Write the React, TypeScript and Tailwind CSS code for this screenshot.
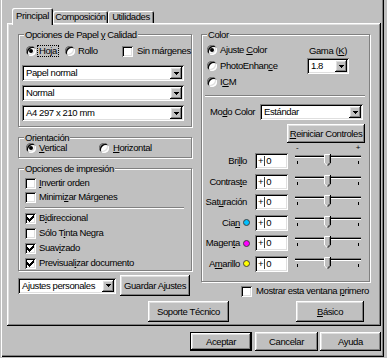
import type { ReactNode } from "react";

// Win9x style bevels
const RAISED =
  "shadow-[inset_-1px_-1px_0_#000,inset_1px_1px_0_#fff,inset_-2px_-2px_0_#808080,inset_2px_2px_0_#dfdfdf]";
const SUNKEN =
  "shadow-[inset_1px_1px_0_#808080,inset_-1px_-1px_0_#fff,inset_2px_2px_0_#000,inset_-2px_-2px_0_#dfdfdf]";
const TAB =
  "shadow-[inset_1px_1px_0_#fff,inset_-1px_0_0_#000,inset_-2px_0_0_#808080]";

function U({ children }: { children: ReactNode }) {
  return <span className="underline">{children}</span>;
}

function Group({ title, className, children }: { title: ReactNode; className: string; children: ReactNode }) {
  return (
    <fieldset className={`border border-[#808080] shadow-[1px_1px_0_#fff,inset_1px_1px_0_#fff] ${className}`}>
      <legend className="ml-[5px] px-px leading-[13px] bg-[#c0c0c0]">{title}</legend>
      {children}
    </fieldset>
  );
}

function Radio({ on }: { on?: boolean }) {
  return (
    <span className={`w-[10px] h-[10px] shrink-0 rounded-full bg-white flex items-center justify-center ${SUNKEN}`}>
      {on && <span className="w-[4px] h-[4px] rounded-full bg-black" />}
    </span>
  );
}

function Check({ on }: { on?: boolean }) {
  return (
    <span className={`w-[11px] h-[11px] shrink-0 bg-white flex items-center justify-center ${SUNKEN}`}>
      {on && (
        <svg width="7" height="7" viewBox="0 0 7 7" shapeRendering="crispEdges">
          <path
            d="M6 0h1v1H6zM5 1h2v1H5zM0 2h1v1H0zM4 2h3v1H4zM0 3h2v1H0zM3 3h3v1H3zM0 4h5v1H0zM1 5h3v1H1zM2 6h1v1H2z"
            fill="#000"
          />
        </svg>
      )}
    </span>
  );
}

function Select({ text, className }: { text: string; className: string }) {
  return (
    <div className={`flex items-stretch bg-white p-[2px] ${SUNKEN} ${className}`}>
      <span className="flex-1 flex items-center pl-[2px] whitespace-nowrap overflow-hidden">{text}</span>
      <span className={`w-[12px] shrink-0 flex items-center justify-center bg-[#c0c0c0] ${RAISED}`}>
        <svg width="5" height="3" viewBox="0 0 5 3" shapeRendering="crispEdges">
          <path d="M0 0h5v1H0zM1 1h3v1H1zM2 2h1v1H2z" fill="#000" />
        </svg>
      </span>
    </div>
  );
}

function Btn({ className, children }: { className: string; children: ReactNode }) {
  return (
    <button type="button" className={`flex items-center justify-center whitespace-nowrap bg-[#c0c0c0] ${RAISED} ${className}`}>
      {children}
    </button>
  );
}

function Slider() {
  return (
    <div className="relative w-[66px] h-[16px]">
      <div className="mt-[4px] h-[3px] border-t border-t-[#808080] border-b border-b-white bg-black" />
      <div className="mt-[3px] flex justify-between px-[2px]">
        <span className="w-px h-[3px] bg-black" />
        <span className="w-px h-[3px] bg-black" />
        <span className="w-px h-[3px] bg-black" />
      </div>
      {/* thumb */}
      <svg className="absolute left-[29px] -top-[1px]" width="7" height="12" viewBox="0 0 7 12">
        <path d="M0 0H7V9L3.5 12L0 9Z" fill="#c0c0c0" />
        <path d="M0.5 9V0.5H6" stroke="#fff" fill="none" />
        <path d="M0.5 9L3.2 11.5" stroke="#fff" fill="none" />
        <path d="M6.5 0V9L3.5 11.8" stroke="#000" fill="none" />
        <path d="M5.5 1V8.6L3.5 10.5" stroke="#808080" fill="none" />
      </svg>
    </div>
  );
}

const SLIDERS: { label: ReactNode; dot?: string }[] = [
  { label: <>Bri<U>l</U>lo</> },
  { label: <>Contras<U>t</U>e</> },
  { label: <>Sat<U>u</U>ración</> },
  { label: <>Cia<U>n</U></>, dot: "bg-[#00c0ff]" },
  { label: <>Magen<U>t</U>a</>, dot: "bg-[#ff00ff]" },
  { label: <>A<U>m</U>arillo</>, dot: "bg-[#ffff00]" },
];

export default function App() {
  return (
    <div className="w-[387px] h-[358px] bg-[#c0c0c0] pl-px text-black text-[9.5px] tracking-[-0.4px] leading-[12px] font-['Liberation_Sans',Arial,sans-serif] overflow-hidden">
      <div className="w-[383px] h-[357px] pt-[8px] pl-[6px] flex flex-col shadow-[inset_1px_0_0_#fff,inset_-1px_-1px_0_#000,inset_-2px_-2px_0_#808080]">
        {/* Tabs */}
        <div className="flex items-end h-[15px] pl-[5px]">
          <div className={`relative z-10 w-[41px] h-[17px] -mb-[2px] bg-[#c0c0c0] rounded-t-[2px] flex justify-center pt-[2px] ${TAB}`}>
            Principal
          </div>
          <div className={`w-[55px] h-[12px] rounded-t-[2px] flex justify-center ${TAB}`}>Composición</div>
          <div className={`w-[46px] h-[12px] rounded-t-[2px] flex justify-center ${TAB}`}>Utilidades</div>
        </div>

        {/* Tab panel */}
        <div className={`w-[374px] h-[303px] flex flex-col pt-[5px] pl-[11px] ${RAISED}`}>
          <div className="flex gap-[9px] h-[270px]">
            {/* Left column */}
            <div className="w-[174px] flex flex-col">
              <Group title={<>Opciones de Papel <U>y</U> Calidad</>} className="h-[99px]">
                <div className="flex flex-col">
                  <div className="mt-[4px] h-[12px] flex items-center pl-[7px]">
                    <div className="w-[39px] flex items-center">
                      <Radio on />
                      <span className="ml-px h-[12px] flex items-center border border-dotted border-black px-px">Hoja</span>
                    </div>
                    <div className="w-[57px] flex items-center gap-[3px]">
                      <Radio />
                      <span>Rollo</span>
                    </div>
                    <div className="flex items-center gap-[4px] whitespace-nowrap">
                      <Check />
                      <span>Sin márgenes</span>
                    </div>
                  </div>
                  <div className="mt-[8px] pl-[3px] flex flex-col gap-[4px]">
                    <Select text="Papel normal" className="w-[162px] h-[16px]" />
                    <Select text="Normal" className="w-[162px] h-[16px]" />
                    <Select text="A4 297 x 210 mm" className="w-[162px] h-[16px]" />
                  </div>
                </div>
              </Group>

              <Group title="Orientación" className="mt-[4px] h-[27px]">
                <div className="-mt-[1px] h-[10px] flex items-center pl-[7px]">
                  <div className="w-[73px] flex items-center gap-[3px]">
                    <Radio on />
                    <span><U>V</U>ertical</span>
                  </div>
                  <div className="flex items-center gap-[4px]">
                    <Radio />
                    <span><U>H</U>orizontal</span>
                  </div>
                </div>
              </Group>

              <Group title="Opciones de impresión" className="mt-[4px] h-[109px]">
                <div className="pt-[1px] pl-[6px] flex flex-col">
                  <div className="h-[14px] flex items-center gap-[3px]">
                    <Check />
                    <span><U>I</U>nvertir orden</span>
                  </div>
                  <div className="h-[14px] flex items-center gap-[3px]">
                    <Check />
                    <span>Minimi<U>z</U>ar Márgenes</span>
                  </div>
                  <div className="mt-[3px] mr-[7px] h-[2px] border-t border-t-[#808080] border-b border-b-white" />
                  <div className="mt-[2px] flex flex-col gap-px">
                    <div className="h-[14px] flex items-center gap-[3px]">
                      <Check on />
                      <span>B<U>i</U>direccional</span>
                    </div>
                    <div className="h-[14px] flex items-center gap-[3px]">
                      <Check />
                      <span>Sólo T<U>i</U>nta Negra</span>
                    </div>
                    <div className="h-[14px] flex items-center gap-[3px]">
                      <Check on />
                      <span>Suav<U>i</U>zado</span>
                    </div>
                    <div className="h-[14px] flex items-center gap-[3px]">
                      <Check on />
                      <span>Previsual<U>i</U>zar documento</span>
                    </div>
                  </div>
                </div>
              </Group>

              <div className="mt-[4px] h-[21px] flex items-center">
                <Select text="Ajustes personales" className="w-[98px] h-[16px]" />
                <Btn className="ml-[4px] w-[70px] h-[21px]">Guardar Ajustes</Btn>
              </div>
            </div>

            {/* Right column */}
            <div className="w-[169px] flex flex-col">
              <Group title="Color" className="h-[255px]">
                <div className="flex flex-col">
                  <div className="mt-px flex">
                    <div className="ml-[5px] flex flex-col">
                      <div className="h-[16px] flex items-center gap-[3px]">
                        <Radio on />
                        <span>Ajuste <U>C</U>olor</span>
                      </div>
                      <div className="h-[16px] flex items-center gap-[3px]">
                        <Radio />
                        <span>PhotoEnhan<U>c</U>e</span>
                      </div>
                      <div className="h-[16px] flex items-center gap-[3px]">
                        <Radio />
                        <span>I<U>C</U>M</span>
                      </div>
                    </div>
                    <div className="ml-auto mr-[20px] flex flex-col">
                      <span className="mt-[3px] pl-[2px] h-[12px]">Gama (<U>K</U>)</span>
                      <Select text="1.8" className="mt-px w-[42px] h-[16px]" />
                    </div>
                  </div>
                  <div className="mt-[5px] ml-[3px] mr-[4px] h-[2px] border-t border-t-[#808080] border-b border-b-white" />
                  <div className="mt-[7px] h-[16px] flex items-center">
                    <span className="w-[58px] pl-[8px] whitespace-nowrap">Mo<U>d</U>o Color</span>
                    <Select text="Estándar" className="w-[103px] h-[16px]" />
                  </div>
                  <Btn className="mt-[4px] self-end mr-[4px] w-[78px] h-[19px]">
                    <span><U>R</U>einiciar Controles</span>
                  </Btn>
                  <div className="mt-px h-[7px] ml-[93px] w-[66px] flex justify-between items-center px-px text-[8px] leading-[7px]">
                    <span>-</span>
                    <span>+</span>
                  </div>
                  <div className="flex flex-col">
                    {SLIDERS.map((s, i) => (
                      <div key={i} className="h-[20.5px] flex items-center">
                        <div className={`w-[53px] flex items-center justify-end ${s.dot ? "pr-[5px] gap-[3px]" : "pr-[8px]"}`}>
                          <span>{s.label}</span>
                          {s.dot && <span className={`w-[7px] h-[7px] rounded-full border border-[#404040] ${s.dot}`} />}
                        </div>
                        <div className={`w-[33px] h-[16px] bg-white flex items-center pl-[3px] ${SUNKEN}`}>
                          <span>+</span>
                          <span className="w-px h-[10px] bg-[#404040] mx-px" />
                          <span>0</span>
                        </div>
                        <div className="ml-[7px]">
                          <Slider />
                        </div>
                      </div>
                    ))}
                  </div>
                </div>
              </Group>
              <div className="mt-[2px] h-[14px] flex items-center pl-[40px] gap-[4px] whitespace-nowrap">
                <Check />
                <span>Mostrar esta ventana <U>p</U>rimero</span>
              </div>
            </div>
          </div>

          <div className="mt-[3px] h-[21px] flex">
            <Btn className="ml-[130px] w-[81px] h-[21px]">Soporte Técnico</Btn>
            <Btn className="ml-[67px] w-[68px] h-[21px]">
              <span><U>B</U>ásico</span>
            </Btn>
          </div>
        </div>

        {/* Dialog buttons */}
        <div className="mt-[6px] w-[374px] h-[19px] flex justify-end">
          <Btn className="w-[62px] h-[19px] border border-black">Aceptar</Btn>
          <Btn className="ml-[3px] w-[63px] h-[19px]">Cancelar</Btn>
          <Btn className="ml-[2px] w-[61px] h-[19px]">Ayuda</Btn>
        </div>
      </div>
    </div>
  );
}
